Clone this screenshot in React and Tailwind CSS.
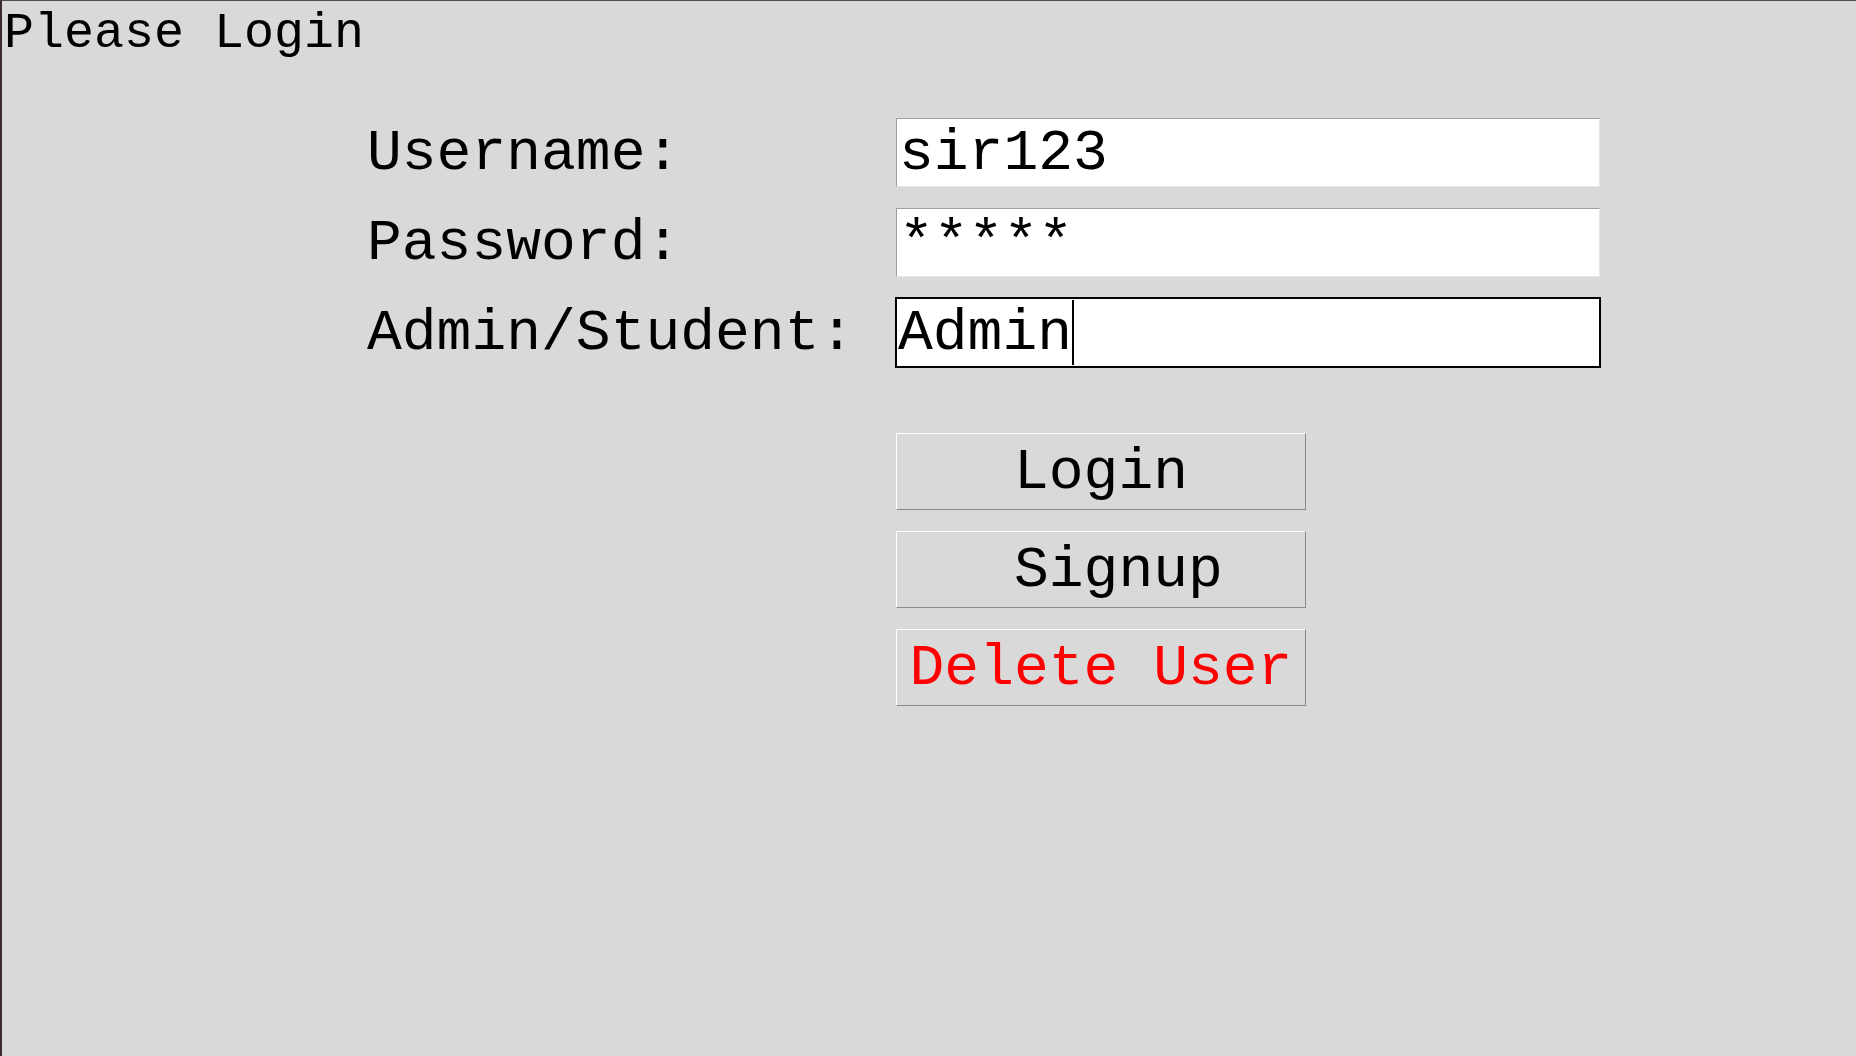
export default function App() {
  const font = "font-['Liberation_Mono','Courier_New',monospace]";
  return (
    <div className={`h-[1056px] w-full overflow-hidden bg-[#d9d9d9] border-l-2 border-t border-l-[#3a2d2b] border-t-[#505050] text-black ${font}`}>
      <div className="pl-[2px] pt-[8px] text-[50px] leading-[50px] whitespace-pre">Please Login</div>

      <div className="mt-[59px] flex flex-col gap-[21px]">
        <div className="flex items-baseline">
          <div className="ml-[365px] w-[529px] text-[58px] leading-[67px] whitespace-pre">Username:</div>
          <div className="h-[69px] w-[704px] bg-white border border-t-[#a0a0a0] border-l-[#a0a0a0] border-r-[#e6e6e6] border-b-[#e6e6e6] pl-[2px] pt-[2px] text-[58px] leading-[66px] whitespace-pre">sir123</div>
        </div>
        <div className="flex items-baseline">
          <div className="ml-[365px] w-[529px] text-[58px] leading-[67px] whitespace-pre">Password:</div>
          <div className="h-[69px] w-[704px] bg-white border border-t-[#a0a0a0] border-l-[#a0a0a0] border-r-[#e6e6e6] border-b-[#e6e6e6] pl-[2px] pt-[2px] text-[58px] leading-[66px] whitespace-pre">*****</div>
        </div>
        <div className="flex items-baseline">
          <div className="ml-[365px] w-[529px] text-[58px] leading-[67px] whitespace-pre">Admin/Student:</div>
          <div className="-mx-px -my-px h-[71px] w-[706px] bg-white border-2 border-black pl-[1px] pt-[2px] text-[58px] leading-[66px] whitespace-pre">
            Admin<span className="inline-block h-[65px] w-[2px] -mt-px bg-black align-top" />
          </div>
        </div>
      </div>

      <div className="ml-[894px] mt-[66px] flex w-[410px] flex-col gap-[21px] text-[58px]">
        <button className="flex h-[77px] w-[410px] items-center justify-center bg-[#d9d9d9] border border-t-white border-l-white border-r-[#8a8a8a] border-b-[#8a8a8a] pt-[2px] leading-[66px] text-black whitespace-pre">Login</button>
        <button className="flex h-[77px] w-[410px] items-center justify-center bg-[#d9d9d9] border border-t-white border-l-white border-r-[#8a8a8a] border-b-[#8a8a8a] pt-[2px] leading-[66px] text-black whitespace-pre">{" Signup"}</button>
        <button className="flex h-[77px] w-[410px] items-center justify-center bg-[#d9d9d9] border border-t-white border-l-white border-r-[#8a8a8a] border-b-[#8a8a8a] pt-[2px] leading-[66px] text-[#ff0000] whitespace-pre">Delete User</button>
      </div>
    </div>
  );
}
